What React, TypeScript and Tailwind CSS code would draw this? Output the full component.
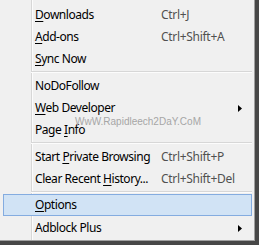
import React from "react";

type Item =
  | { type: "sep" }
  | { type: "item"; pre: string; u?: string; post?: string; sc?: string; arrow?: boolean; hl?: boolean };

const items: Item[] = [
  { type: "item", pre: "", u: "D", post: "ownloads", sc: "Ctrl+J" },
  { type: "item", pre: "", u: "A", post: "dd-ons", sc: "Ctrl+Shift+A" },
  { type: "item", pre: "", u: "S", post: "ync Now" },
  { type: "sep" },
  { type: "item", pre: "NoDoFollow" },
  { type: "item", pre: "", u: "W", post: "eb Developer", arrow: true },
  { type: "item", pre: "Page ", u: "I", post: "nfo" },
  { type: "sep" },
  { type: "item", pre: "Start ", u: "P", post: "rivate Browsing", sc: "Ctrl+Shift+P" },
  { type: "item", pre: "Clear Recent ", u: "H", post: "istory...", sc: "Ctrl+Shift+Del" },
  { type: "sep" },
  { type: "item", pre: "", u: "O", post: "ptions", hl: true },
  { type: "item", pre: "Adblock Plus", arrow: true },
];

function Arrow() {
  return (
    <svg width="4" height="7" viewBox="0 0 4 7" className="block">
      <polygon points="0,0 4,3.5 0,7" fill="#000" />
    </svg>
  );
}

export default function App() {
  return (
    <div className="w-[259px] h-[245px] bg-[#474747] overflow-hidden">
      <div
        className="relative w-[255px] h-[241px] bg-[#f0f0f0] border-r border-b border-[#a0a0a0] pt-[4px] flex flex-col"
        style={{ fontFamily: '"Noto Sans", sans-serif' }}
      >
        <div className="absolute left-[31px] top-0 bottom-0 w-px bg-[#d7d7d7]" />
        <div className="absolute left-[32px] top-0 bottom-0 w-px bg-[#fcfcfc]" />
        {items.map((it, i) =>
          it.type === "sep" ? (
            <div key={i} className="relative h-[5px] pl-[31px] pr-[2px] pt-[1px]">
              <div className="h-px bg-[#d7d7d7]" />
              <div className="h-px bg-[#fcfcfc]" />
            </div>
          ) : (
            <div
              key={i}
              className={
                it.hl
                  ? "relative h-[22px] -mt-px mb-px ml-[3px] mr-[2px] pl-[31px] pr-[9px] flex items-center border border-[#84ace0] bg-[#d1e3f5] text-[12px] text-black"
                  : "relative h-[22px] pl-[35px] pr-[12px] flex items-center text-[12px] text-black"
              }
            >
              <span className="w-[126px] shrink-0 whitespace-nowrap tracking-[-0.45px]">
                {it.pre}
                {it.u && <span className="underline underline-offset-2">{it.u}</span>}
                {it.post}
              </span>
              <span className="flex-1 whitespace-nowrap tracking-[-0.3px] text-[#505050]">{it.sc}</span>
              {it.arrow && <Arrow />}
            </div>
          )
        )}
        <div
          className="absolute left-[75px] top-[115px] text-[10px] leading-[14px] text-[#a6a6a6]"
          style={{ fontFamily: '"Liberation Sans", Arial, sans-serif' }}
        >
          WwW.Rapidleech2DaY.CoM
        </div>
      </div>
    </div>
  );
}
